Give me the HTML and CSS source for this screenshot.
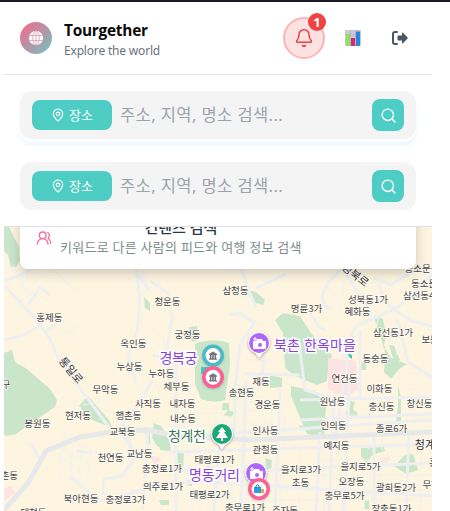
FILE: index.html
```html
<!DOCTYPE html>
<html lang="ko">
<head>
<meta charset="utf-8">
<title>Tourgether</title>
<link rel="stylesheet" href="styles.css">
</head>
<body>
<svg width="0" height="0" class="defs">
  <symbol id="pin" viewBox="0 0 24 24"><path d="M20 10c0 5-5.500 10.200-7.400 11.800a1 1 0 0 1-1.200 0C9.500 20.200 4 15 4 10a8 8 0 0 1 16 0Z"/><circle cx="12" cy="10" r="3"/></symbol>
  <symbol id="search" viewBox="0 0 24 24"><circle cx="11" cy="11" r="8"/><path d="m21 21-4.300-4.300"/></symbol>
</svg>
<div class="app">
  <header class="header">
    <div class="logo"><svg width="16" height="16" viewBox="0 0 16 16"><circle cx="8" cy="8" r="7.200" fill="#fff" fill-opacity=".95"/><g fill="none" stroke="#d998ab" stroke-width=".7"><ellipse cx="8" cy="8" rx="3.300" ry="7.200"/><path d="M1 5.500h14M1 10.500h14M8 1v14" /></g></svg></div>
    <div class="brand"><h1>Tourgether</h1><p>Explore the world</p></div>
    <button class="bell"><svg width="20" height="20" viewBox="0 0 24 24"><path d="M10.270 21a2 2 0 0 0 3.460 0M3.260 15.330A1 1 0 0 0 4 17h16a1 1 0 0 0 .74-1.670C19.410 13.960 18 12.500 18 8A6 6 0 0 0 6 8c0 4.500-1.410 5.960-2.740 7.330"/></svg><span class="badge">1</span></button>
    <button class="stats"><svg width="16" height="16" viewBox="0 0 16 16"><rect width="16" height="16" rx="1" fill="#cdc8d6"/><path d="M0 5h16M0 10h16M5.500 0v16M10.500 0v16" stroke="#b3adbf" stroke-width=".7"/><rect x="1" y="4" width="4" height="12" fill="#91df61"/><rect x="6" y="8" width="4" height="8" fill="#d9276f"/><rect x="11" y="1.500" width="4" height="14.500" fill="#2688d9"/></svg></button>
    <button class="logout"><svg width="16" height="14" viewBox="0 0 16 14"><path d="M5 1H3a2 2 0 0 0-2 2v8a2 2 0 0 0 2 2h2" fill="none" stroke="#4a5568" stroke-width="2" stroke-linecap="round"/><path d="M5.500 5.500q0-1 1-1H10V2.300q0-1.300 1-.5l5 5.200-5 5.200q-1 .8-1-.5V9.500H6.500q-1 0-1-1Z" fill="#4a5568"/></svg></button>
  </header>
  <section class="search first">
    <div class="bar"><button class="type"><svg width="14" height="14"><use href="#pin"/></svg>장소</button><span class="hint">주소, 지역, 명소 검색...</span><button class="go"><svg width="17" height="17"><use href="#search"/></svg></button></div>
  </section>
  <section class="search second">
    <div class="bar"><button class="type"><svg width="14" height="14"><use href="#pin"/></svg>장소</button><span class="hint">주소, 지역, 명소 검색...</span><button class="go"><svg width="17" height="17"><use href="#search"/></svg></button></div>
  </section>
  <main class="map">
    <svg class="tiles" width="428" height="284" viewBox="4 227 428 284">
      <rect x="4" y="227" width="428" height="284" fill="#fef5e1"/>
      <g fill="#c9e6cb">
        <path d="M4 227h5l10 20 1 14-4 6-5 0-3-12-4-4Z"/>
        <path d="M4 353l8-3 3 12 12 7 23 20 7 11-2 7-25 17-14 10-9 2-3-1Z"/>
        <path d="M88 396l21 24 3 8-22-9-11-13Z"/>
        <path d="M144 297l6 6v8l-5-3ZM189 327l8-1 1 14-6 2Z"/>
        <path d="M195 344q17-7 34-1l1 22-5 35q-11 4-24-1l-6-15Z"/>
        <path d="M247 290l9 2 9 8-2 5-10-3Z"/>
        <path d="M275 320l8-7 17 3 11 17 21 22-4 14-1 12-10 4-22-9-10-8-2-35Z"/>
        <path d="M270 375l12 3v9l-12 1ZM291 386l24 5 11 14-2 32-17-3-16-38Z"/>
        <path d="M374 315l9 4 3 15-2 11 7 13 16 6-8 5-8 10-7-7 1-20-5-17-5-14ZM389 345l5 1 6 14-5 4ZM361 363h5v7h-5Z"/>
        <path d="M398 385l3 13v30l-5-7 2-15ZM350 401l5 1-2 7 5 5-2 3-11-2Z"/>
        <path d="M361 448l23-1 1 4-13 4-5 8-6-7Z"/>
        <path d="M405 455l8-1 5 16-12 4-12-8ZM365 500h4v9h-5Z"/>
        <path d="M153 423l8 3 8 12 2 13-11-1ZM154 423l14 25-10-1-6-9Z"/>
        <path d="M176 449l8 3-1 17-5-4ZM228 410l7 2-4 5-7-2ZM265 458l7 2-1 12-4-1ZM223 403h6v7h-7ZM207 466l7 1-2 8-5-1ZM299 425l8 2-5 4Z"/>
        <path d="M145 427l5 3v15l-4-6ZM205 494h6v5h-6ZM187 480h5v6h-5ZM159 500h10v5h-8Z"/>
      </g>
      <g fill="#fde3e2"><path d="M328 358l28 3 2 29-11 6-19-7ZM4 489l7-3 4 7-11 8ZM331 386l20 0 1 7-17 1ZM383 458l7-1-2 6-8-1ZM150 455l12 4-8 6Z"/></g>
      <g class="minor">
        <path d="M4 263l24 13-9 14 19 8-3 20M10 306l20-11M13 265l12 24 28 13M41 276l34 8M54 270l24 23M62 329l20 13M46 340l34-14M143 269l4 20-12 12M128 279l15-5"/>
        <path d="M62 435l42 22M58 446l33 19M58 456l35 20M65 431l-6 45M73 444l-4 38M82 447l-4 40M91 449l-5 45"/>
        <path d="M83 405l26-5M81 407l-4 13M113 354l14 17 22 4M133 390l20-8 9 12M150 327l15 11-6 25M172 355l14 6M165 387l28 0M155 398l35 2"/>
        <path d="M235 300l14-3M230 310l34 15M262 329l0 35M245 360h30M230 385h34M237 410h46M230 424h55M246 385v50M260 385v45M272 398v48M285 406v40"/>
        <path d="M323 285l17 14-10 8M344 283l-5 32M380 310l-9 43M369 342l18 8M400 310l-12 36M411 310l-15 45M349 353h22M408 372l24 4M405 389h27M331 415h70M333 434h80M350 402l-5 50M369 400v50M382 400v50M414 400v50"/>
        <path d="M188 452v59M200 452v59M214 464v47M232 460v51M246 460v51M265 460v51M280 452v59M299 451v60M324 456v55M346 457v54M364 468v43M381 475v36M400 475v36M421 452v59"/>
        <path d="M179 469h73M180 480h60M180 500h252M267 475h165M275 490h157M314 460h80M175 413h47M176 425h35M185 395v43M198 410v42"/>
      </g>
      <g class="road">
        <path d="M4 281q32-10 40-25M4 285l36 39 11 17 8 19 32 43 20 27M4 340l17-4 19-10M29 304l11-17 10 8M46 331l14-10"/>
        <path d="M136 269l4 30-3 33-9 23 8 28M138 275l12 16M150 281l18 12 4 25-6 38 4 28M153 355l20 7M153 380l-18 29-21 25"/>
        <path d="M223 269l18-1 7 20 8 20M256 288l30-14M230 315l10-2 14 10-14 22-5 42-1 50M264 350l-2 36M244 374l56 1M299 342l6 48 27 8"/>
        <path d="M310 313l9 14 7 4M332 310q-18-10-2-29 12-13 15-16M344 270l28 45M358 325l35-15 18-14 21-22M357 325l-10 19-1 32M345 377l-11 73M360 330v68M373 278l18 7 19-12M379 283l5 19 27 19 21 5M398 320l10 42 24 15"/>
        <path d="M119 430l20 29M123 423l12 35-13 18-18 3-1 14 13 7 27-11 4-22M148 429l-5 80M92 453l-16-2M31 443l10 19"/>
        <path d="M176 352v159M177 437l255-17M169 452l263-8M219 445l-5 66M246 380l-5 131M280 387l-5 124M320 432l-4 79M334 400l-5 111M350 375l-7 136M374 435v76M409 430l-3 81M300 400l132-3M300 420l132-6"/>
        <path d="M159 468l45 5 228-10M153 484l55-2 224 14M71 477l19 17M90 503l53-13"/>
      </g>
      <path d="M4 510l24-27 18-32 34-14 39-6 30-1 27 6 74 4 182-8" fill="none" stroke="#e7e8ea" stroke-width="5"/>
      <path d="M348 353l4 2 0 4-3-2ZM201 367h8v7h-8Z" fill="#43cac0"/>
      <g class="label">
        <text x="49.300" y="320.500">홍제동</text><text x="133.300" y="346.500">옥인동</text><text x="129.500" y="369.500">누상동</text><text x="105.500" y="393">무악동</text><text x="6" y="388">구</text>
        <text x="167.500" y="304.500">청운동</text><text x="235.500" y="293.500">삼청동</text><text x="187.500" y="337.500">궁정동</text><text x="161.500" y="377">누하동</text><text x="176.500" y="389.500">체부동</text><text x="261" y="384.500">재동</text><text x="241.500" y="395.500">송현동</text>
        <text x="306.500" y="311.500">명륜3가</text><text x="422" y="272">동소문동</text><text x="428.500" y="286.500">동소문동</text><text x="423" y="298.500">삼선동4가</text><text x="368" y="302.500">성북동1가</text><text x="357.500" y="314.500">혜화동</text><text x="393" y="336">삼선동1가</text><text x="434.500" y="343">보문동</text><text x="375.500" y="361.500">동숭동</text><text x="344.500" y="381.500">연건동</text><text x="379.500" y="392">이화동</text>
        <text x="148" y="406.500">사직동</text><text x="78" y="418.500">현저동</text><text x="128.500" y="418.500">행촌동</text><text x="37.300" y="426.500">봉원동</text><text x="122.500" y="434.500">교북동</text><text x="110.500" y="461">천연동</text><text x="139.500" y="456.500">교남동</text><text x="5" y="478.500">신촌동</text><text x="81" y="501.500">북아현동</text><text x="125.500" y="503">충정로3가</text><text x="33.500" y="516">대현동</text>
        <text x="182.500" y="407">내자동</text><text x="267.500" y="407.500">경운동</text><text x="183" y="421.500">내수동</text><text x="265.500" y="433.500">인사동</text><text x="265.500" y="452.500">관철동</text><text x="214.500" y="462.500">태평로1가</text><text x="162" y="471.500">충정로1가</text><text x="301" y="472.500">을지로3가</text><text x="163" y="490">의주로1가</text><text x="209.500" y="497.500">태평로2가</text><text x="300.500" y="486">초동</text><text x="245" y="510.500">충무로1가</text><text x="285" y="513.500">주자동</text>
        <text x="332.500" y="404.500">원남동</text><text x="381.500" y="409.500">충신동</text><text x="419.500" y="406.500">창신동</text><text x="333.500" y="428.500">인의동</text><text x="391.500" y="431.500">종로6가</text><text x="336.500" y="448.500">예지동</text><text x="360.500" y="469.500">을지로5가</text><text x="351.500" y="484.500">오장동</text><text x="396" y="490.500">광희동2가</text><text x="435.500" y="487.500">무학동</text><text x="344.500" y="498.500">충무로5가</text><text x="391.500" y="512">장충동1가</text><text x="442" y="465.500">흥인동</text>
      </g>
      <g class="label way"><text transform="translate(68 373) rotate(50)">통일로</text><text transform="translate(353 278) rotate(38)">성북로</text><text x="430" y="448.500">청계천</text></g>
      <g class="place purple"><text x="159.500" y="363" textLength="38">경복궁</text><text x="274" y="349.500" textLength="82">북촌 한옥마을</text><text x="189" y="480" textLength="51">명동거리</text></g>
      <g class="place green"><text x="168" y="441" textLength="38">청계천</text></g>
      <g class="marker">
        <g transform="translate(259 343)"><path class="drop" d="M-4 10 0 15.500 4 10a11 11 0 1 0-8 0Z"/><circle r="10" fill="#ae67fa"/><path d="M-6-2h3l1-2h5l1 2h3v8H-6Z" fill="#fff"/><circle cx="1" cy="2" r="2" fill="#ae67fa"/><path d="M-4-6v4M-6-4h4" stroke="#fff"/></g>
        <g transform="translate(222 434)"><path class="drop" d="M-4 10 0 15.500 4 10a11 11 0 1 0-8 0Z"/><circle r="10" fill="#1ba876"/><path d="M0-7l4 5H2l4 6H1v3h-2V4h-5l4-6h-2Z" fill="#fff"/></g>
        <g transform="translate(256 473)"><path class="drop" d="M-4 10 0 15.500 4 10a11 11 0 1 0-8 0Z"/><circle r="10" fill="#ae67fa"/><path d="M-6-2h3l1-2h5l1 2h3v8H-6Z" fill="#fff"/><circle cx="1" cy="2" r="2" fill="#ae67fa"/><path d="M-4-6v4M-6-4h4" stroke="#fff"/></g>
        <g transform="translate(213 355.500)"><circle class="dot" r="9.200" stroke="#4cb9c9"/><path d="M-4-1.500 0-4l4 2.500v1H-4ZM-3-.5h1.500V3H-3ZM-.8-.5H.8V3H-.8ZM1.500-.5H3V3H1.500ZM-4 3H4v1.200H-4Z" fill="#77717e"/></g>
        <g transform="translate(213 377.300)"><circle class="dot" r="9.200" stroke="#fc5e97"/><path d="M-4-1.500 0-4l4 2.500v1H-4ZM-3-.5h1.500V3H-3ZM-.8-.5H.8V3H-.8ZM1.500-.5H3V3H1.500ZM-4 3H4v1.200H-4Z" fill="#77717e"/></g>
        <g transform="translate(259 489)"><circle class="dot" r="9.200" stroke="#fc5e97"/><path d="M-5-2h7v6h-7Z" fill="#2e9be6"/><path d="M-3-1v-2q1.500-3 3 0v2" fill="none" stroke="#1977c4"/><path d="M2 0h3v4H2Z" fill="#f4a13a"/></g>
      </g>
    </svg>
    <div class="card">
      <svg class="users" width="16" height="16" viewBox="0 0 24 24"><path d="M18 21a8 8 0 0 0-16 0M22 20c0-3.370-2-6.500-4-8a5 5 0 0 0-.45-8.300"/><circle cx="10" cy="8" r="5"/></svg>
      <div class="cardtext"><strong>컨텐츠 검색</strong><span>키워드로 다른 사람의 피드와 여행 정보 검색</span></div>
    </div>
  </main>
</div>
</body>
</html>
```

FILE: styles.css
```css
* { box-sizing: border-box; }
body { margin: 0; height: 511px; overflow: hidden; background: #fff; border-top: 2px solid #1a1a27; font-family: "Noto Sans", "Noto Sans CJK KR", sans-serif; }
button { border: 0; padding: 0; font: inherit; background: none; display: flex; align-items: center; justify-content: center; }
.defs { display: block; height: 0; }
.app { width: 428px; margin-left: 4px; }
.header { height: 73px; border-bottom: 1px solid #e5e5e5; display: flex; align-items: center; padding: 0 16px; }
.logo { width: 32px; height: 32px; border-radius: 50%; background: linear-gradient(135deg, #fb6488, #70c5c7); display: flex; align-items: center; justify-content: center; }
.brand { margin-left: 12px; padding-top: 5px; flex: 1; }
h1 { margin: 0; font: 700 15.4px/20px "Open Sans", sans-serif; color: #0a0a0a; letter-spacing: -.25px; }
.brand p { margin: 0; font: 12px/20px "Noto Sans", sans-serif; color: #6b7280; letter-spacing: -.18px; }
.bell { position: relative; width: 42px; height: 42px; border-radius: 50%; border: 2px solid #fcb5b5; background: #fee2e2; }
.bell svg { fill: none; stroke: #ea4141; stroke-width: 1.800; stroke-linecap: round; stroke-linejoin: round; }
.badge { position: absolute; right: -3px; top: -6px; width: 18px; height: 18px; border-radius: 50%; background: #ef4444; color: #fff; font: 700 13px/18px "Noto Sans", sans-serif; text-align: center; }
.stats { margin-left: 20px; }
.logout { margin: 0 8px 0 31px; }
.search { padding: 16px; background: #fff; }
.first { height: 71px; overflow: hidden; }
.first .bar { box-shadow: 0 3px 0 #fff, 0 7px 5px #edf7ff; }
.second { height: 81px; border-bottom: 1px solid #dfe1e1; }
.bar { height: 48px; border-radius: 12px; background: #f4f4f4; display: flex; align-items: center; padding: 0 12px; }
.type { width: 80px; height: 30px; border-radius: 8px; background: #4ecdc4; color: #fff; font-size: 13px; gap: 4px; padding-bottom: 1px; }
.type svg, .go svg { fill: none; stroke: #fff; stroke-width: 2; stroke-linecap: round; stroke-linejoin: round; }
.hint { flex: 1; margin-left: 8px; color: #9ca3af; font-size: 16.5px; letter-spacing: .42px; line-height: 24px; white-space: nowrap; }
.go { width: 32px; height: 32px; border-radius: 8px; background: #4ecdc4; }
.map { position: relative; height: 284px; overflow: hidden; }
.tiles { display: block; font-family: "Noto Sans CJK KR", sans-serif; }
.road { fill: none; stroke: #eeeff1; stroke-width: 3; stroke-linejoin: round; }
.minor { fill: none; stroke: #f4f2ec; stroke-width: 1.200; }
.label { font-size: 9.5px; fill: #42464b; text-anchor: middle; paint-order: stroke; stroke: #fffaf0; stroke-width: 1.500px; }
.way { font-size: 11px; fill: #2b3037; }
.place { font-size: 14px; font-weight: 400; paint-order: stroke; stroke: #fff; stroke-width: 3px; }
.purple { fill: #863fdc; }
.green { fill: #3d7657; }
.drop { fill: #fff; filter: drop-shadow(0 1px 1px #0005); }
.dot { fill: #fff; stroke-width: 3.500; filter: drop-shadow(0 1px 1px #0003); }
.card { position: absolute; left: 16px; top: -19px; width: 396px; height: 61px; border-radius: 8px; background: #fff; box-shadow: 0 4px 12px #0003; display: flex; padding: 22px 16px 0; }
.users { margin-top: 0; fill: none; stroke: #fc6a9f; stroke-width: 2; stroke-linecap: round; stroke-linejoin: round; }
.cardtext { margin-left: 8px; margin-top: -13px; display: flex; flex-direction: column; text-align: center; white-space: nowrap; }
.cardtext strong { font-size: 15px; line-height: 20px; font-weight: 500; color: #2d3748; }
.cardtext span { font-size: 13px; letter-spacing: .26px; line-height: 20px; color: #7f8c8d; }
```
